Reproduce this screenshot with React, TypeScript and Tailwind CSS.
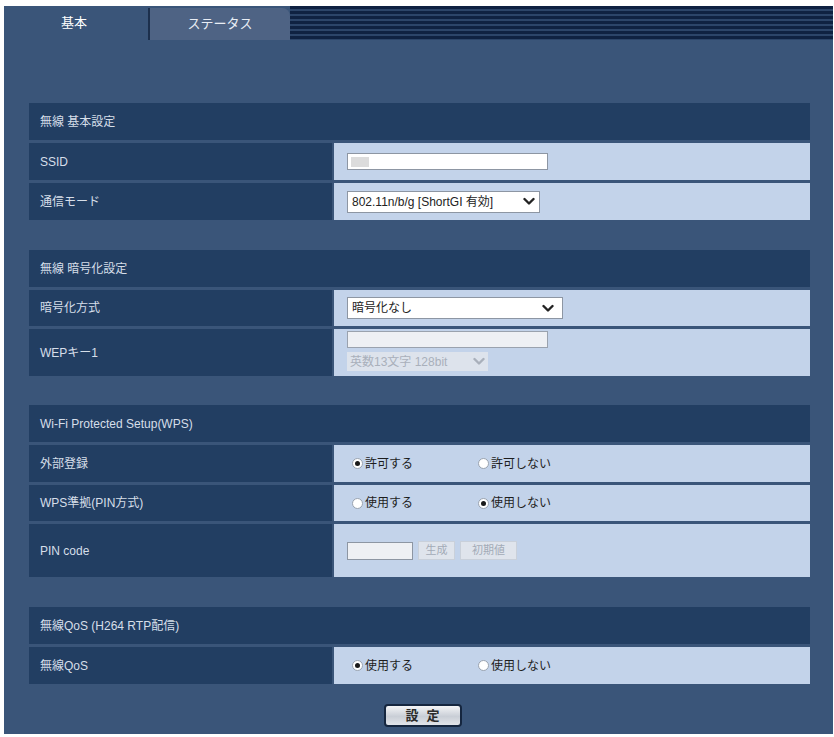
import React from "react";

const font = { fontFamily: '"Liberation Sans", "Noto Sans CJK JP", sans-serif' };

function Chevron({ color = "#222" }: { color?: string }) {
  return (
    <svg width="12" height="9" viewBox="0 0 12 9" className="shrink-0">
      <path d="M1.5 2 L6 6.5 L10.5 2" fill="none" stroke={color} strokeWidth="2.4" strokeLinecap="round" strokeLinejoin="round" />
    </svg>
  );
}

function Radio({ checked, label }: { checked: boolean; label: string }) {
  return (
    <div className="flex items-center gap-[2px]">
      <div className="w-[11px] h-[11px] rounded-full bg-white border border-[#9aa3b0] flex items-center justify-center">
        {checked && <div className="w-[5px] h-[5px] rounded-full bg-[#1a1a1a]" />}
      </div>
      <span className="text-[12px] text-[#1d1d1d]">{label}</span>
    </div>
  );
}

function Header({ children }: { children: React.ReactNode }) {
  return (
    <div className="h-[37px] bg-[#223e62] flex items-center pl-[11px] text-[12px] text-[#d6dee9]">
      {children}
    </div>
  );
}

function Row({ label, h, children }: { label: string; h: string; children: React.ReactNode }) {
  return (
    <div className={`flex gap-[2px] ${h}`}>
      <div className="w-[303px] bg-[#223e62] flex items-center pl-[11px] text-[12px] text-[#d6dee9]">{label}</div>
      <div className="flex-1 bg-[#c3d3ea] flex items-center pl-[13px]">{children}</div>
    </div>
  );
}

export default function App() {
  return (
    <div className="w-[834px] h-[737px] bg-white pt-[6px] pl-[4px]" style={font}>
      <div className="w-[829px] h-[728px] bg-[#3a5579] flex flex-col">
        {/* tabs */}
        <div className="h-[34px] flex">
          <div className="w-[144px] flex items-center justify-center pr-[4px] text-[13px] text-white">基本</div>
          <div className="w-[142px] mt-[2px] bg-[#4e6384] rounded-tr-[8px] flex items-center justify-center text-[13px] text-[#e8edf4] border-l-2 border-[#1c2f4c]">
            ステータス
          </div>
          <div className="flex-1 bg-[repeating-linear-gradient(to_bottom,#0f2242_0px,#0f2242_3px,#2c4569_3px,#2c4569_5px)]" />
        </div>

        <div className="pl-[25px] pr-[23px] flex flex-col">
          {/* section 1 */}
          <div className="mt-[63px] flex flex-col gap-[3px]">
            <Header>無線 基本設定</Header>
            <Row label="SSID" h="h-[37px]">
              <div className="w-[201px] h-[17px] bg-white border border-[#8d96a3] flex items-center pl-[3px]">
                <div className="w-[18px] h-[10px] bg-[#dcdcdc]" />
              </div>
            </Row>
            <Row label="通信モード" h="h-[37px]">
              <div className="w-[193px] h-[22px] bg-white border border-[#8d96a3] flex items-center justify-between pl-[4px] pr-[4px]">
                <span className="text-[12px] text-[#222] whitespace-nowrap">802.11n/b/g [ShortGI 有効]</span>
                <Chevron />
              </div>
            </Row>
          </div>

          {/* section 2 */}
          <div className="mt-[30px] flex flex-col gap-[3px]">
            <Header>無線 暗号化設定</Header>
            <Row label="暗号化方式" h="h-[36px]">
              <div className="w-[216px] h-[22px] bg-white border border-[#8d96a3] flex items-center justify-between pl-[4px] pr-[8px]">
                <span className="text-[12px] text-[#222]">暗号化なし</span>
                <Chevron />
              </div>
            </Row>
            <Row label="WEPキー1" h="h-[47px]">
              <div className="flex flex-col gap-[4px] self-start pt-[2px]">
                <div className="w-[201px] h-[17px] bg-[#eef0f4] border border-[#9aa2ae]" />
                <div className="w-[141px] h-[19px] bg-[#dde3ec] flex items-center justify-between pl-[3px] pr-[3px]">
                  <span className="text-[12px] text-[#a9b0bb] whitespace-nowrap">英数13文字 128bit</span>
                  <Chevron color="#a9b0bb" />
                </div>
              </div>
            </Row>
          </div>

          {/* section 3 */}
          <div className="mt-[29px] flex flex-col gap-[3px]">
            <Header>Wi-Fi Protected Setup(WPS)</Header>
            <Row label="外部登録" h="h-[37px]">
              <div className="flex items-center pl-[5px]">
                <div className="w-[126px]"><Radio checked label="許可する" /></div>
                <Radio checked={false} label="許可しない" />
              </div>
            </Row>
            <Row label="WPS準拠(PIN方式)" h="h-[36px]">
              <div className="flex items-center pl-[5px]">
                <div className="w-[126px]"><Radio checked={false} label="使用する" /></div>
                <Radio checked label="使用しない" />
              </div>
            </Row>
            <Row label="PIN code" h="h-[53px]">
              <div className="flex items-center gap-[5px]">
                <div className="w-[66px] h-[18px] bg-[#eef0f4] border border-[#8d96a3]" />
                <div className="w-[37px] h-[19px] bg-[#dfe4ec] border border-[#c9d0da] flex items-center justify-center text-[11px] text-[#a3abb7]">生成</div>
                <div className="w-[57px] h-[19px] bg-[#dfe4ec] border border-[#c9d0da] flex items-center justify-center text-[11px] text-[#a3abb7]">初期値</div>
              </div>
            </Row>
          </div>

          {/* section 4 */}
          <div className="mt-[30px] flex flex-col gap-[3px]">
            <Header>無線QoS (H264 RTP配信)</Header>
            <Row label="無線QoS" h="h-[37px]">
              <div className="flex items-center pl-[5px]">
                <div className="w-[126px]"><Radio checked label="使用する" /></div>
                <Radio checked={false} label="使用しない" />
              </div>
            </Row>
          </div>

          <div className="mt-[20px] flex justify-center pl-[6px]">
            <div className="w-[78px] h-[23px] rounded-[4px] border-2 border-[#15263f] bg-[linear-gradient(to_bottom,#f4f5f7,#c9ced6_55%,#e2e5ea)] flex items-center justify-center text-[13px] font-bold text-[#2b2b2b] tracking-[8px] pl-[8px]">
              設定
            </div>
          </div>
        </div>
      </div>
    </div>
  );
}
